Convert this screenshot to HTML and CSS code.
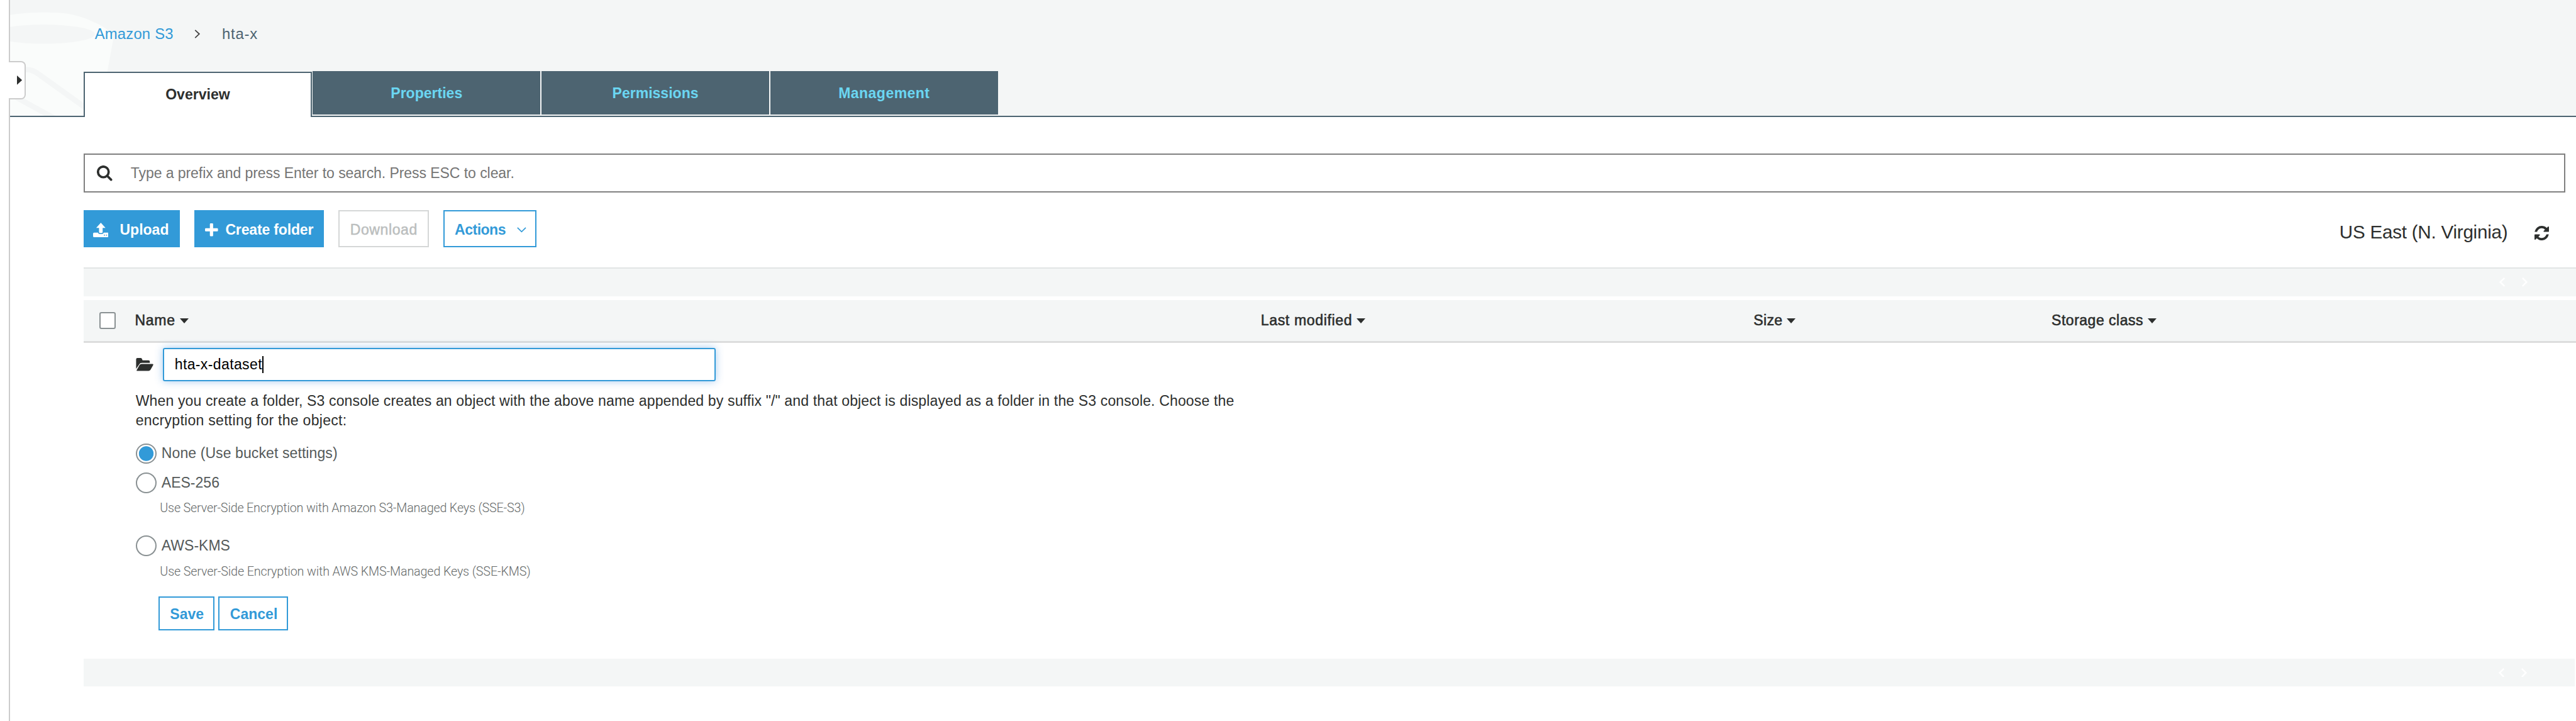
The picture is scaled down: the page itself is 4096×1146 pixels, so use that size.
FILE: index.html
```html
<!DOCTYPE html>
<html lang="en">
<head>
<meta charset="utf-8">
<title>S3 Management Console</title>
<link rel="stylesheet" href="styles.css">
</head>
<body>
<div class="rail">
  <button class="rail-toggle" aria-label="Open panel"><svg viewBox="0 0 10 18"><path d="M0 0L10 9L0 18Z"/></svg></button>
</div>
<main class="main">
  <header class="header">
    <svg class="bucket" viewBox="0 0 220 224" preserveAspectRatio="none">
      <path class="bucket-body" d="M0 29C30 24 60 23 96 25C125 27 145 35 160 42C182 51 198 62 199 78L188 138L181 224H0Z"/>
      <ellipse class="bucket-hole" cx="65" cy="66" rx="99" ry="18.5"/>
      <path class="bucket-line" d="M22 134.500C42 133 48 138 55 143L150 211M12 188L96 234"/>
    </svg>
    <nav class="crumbs">
      <a class="crumb-link"><span class="t t-s3">Amazon S3</span></a>
      <svg class="crumb-sep" viewBox="0 0 11 17"><path d="M1.500 1L9.500 8.500L1.500 16"/></svg>
      <span class="t t-bucket">hta-x</span>
    </nav>
    <div class="tabs">
      <div class="tab tab-active"><span class="t">Overview</span></div>
      <div class="tab"><span class="t">Properties</span></div>
      <div class="tab"><span class="t">Permissions</span></div>
      <div class="tab"><span class="t t-mgmt">Management</span></div>
    </div>
  </header>
  <section class="content">
    <div class="search">
      <svg class="search-icon" viewBox="0 0 30 30"><circle cx="12.500" cy="12.500" r="10.300"/><path d="M20 20L27.500 27.500"/></svg>
      <span class="t t-search">Type a prefix and press Enter to search. Press ESC to clear.</span>
    </div>
    <div class="toolbar">
      <button class="btn btn-fill btn-upload">
        <svg class="icon-upload" viewBox="0 0 30 28"><path d="M15 0L24 10H18.500V18.500Q18.500 20 15 20Q11.500 20 11.500 18.500V10H6Z"/><path d="M2 19H9.500Q10 22 15 22Q20 22 20.500 19H28Q30 19 30 21V26Q30 28 28 28H2Q0 28 0 26V21Q0 19 2 19ZM21 23V25H23V23ZM25 23V25H27V23Z" fill-rule="evenodd"/></svg>
        <span class="t">Upload</span>
      </button>
      <button class="btn btn-fill btn-create">
        <svg class="icon-plus" viewBox="0 0 24 24"><path d="M9 1.500Q9 0 10.500 0H13.500Q15 0 15 1.500V9H22.500Q24 9 24 10.500V13.500Q24 15 22.500 15H15V22.500Q15 24 13.500 24H10.500Q9 24 9 22.500V15H1.500Q0 15 0 13.500V10.500Q0 9 1.500 9H9Z"/></svg>
        <span class="t t-create">Create folder</span>
      </button>
      <button class="btn btn-off btn-download"><span class="t">Download</span></button>
      <button class="btn btn-line btn-actions">
        <span class="t t-actions">Actions</span>
        <svg class="icon-down" viewBox="0 0 18 10"><path d="M1 1L9 9L17 1"/></svg>
      </button>
      <div class="region">
        <span class="t">US East (N. Virginia)</span>
        <svg class="icon-refresh" viewBox="0 0 1536 1536"><path d="M1511 928q0 5-1 7-64 268-268 434.500t-478 166.500q-146 0-282.500-55t-243.500-157l-129 129q-19 19-45 19t-45-19-19-45v-448q0-26 19-45t45-19h448q26 0 45 19t19 45-19 45l-137 137q71 66 161 102t187 36q134 0 250-65t186-179q11-17 53-117 8-23 30-23h192q13 0 22.500 9.500t9.500 22.500zM1536 128v448q0 26-19 45t-45 19h-448q-26 0-45-19t-19-45 19-45l138-138q-148-137-349-137-134 0-250 65t-186 179q-11 17-53 117-8 23-30 23h-199q-13 0-22.500-9.500t-9.500-22.500v-7q65-268 270-434.500t480-166.500q146 0 284 55.500t245 156.500l130-129q19-19 45-19t45 19 19 45z"/></svg>
      </div>
    </div>
    <div class="pager pager-top">
      <svg viewBox="0 0 11 18"><path d="M10 1L2 9L10 17"/></svg>
      <svg viewBox="0 0 11 18"><path d="M1 1L9 9L1 17"/></svg>
    </div>
    <div class="thead">
      <span class="checkbox"></span>
      <span class="th"><span class="t t-name">Name</span><i class="sort"></i></span>
      <span class="th"><span class="t t-modified">Last modified</span><i class="sort"></i></span>
      <span class="th"><span class="t t-size">Size</span><i class="sort"></i></span>
      <span class="th"><span class="t t-class">Storage class</span><i class="sort"></i></span>
    </div>
    <div class="form">
      <div class="name-row">
        <svg class="icon-folder" viewBox="0 0 33 25"><path d="M0 21V2.500Q0 0 2.500 0H9Q11 0 11.500 2L12.500 4.500H24Q26.500 4.500 26.500 7V9.500H11Q7.500 9.500 6 12.500Z"/><path d="M2 25Q.5 25 1.300 23L6.800 13.500Q8 11.500 10.500 11.500H31.500Q34 11.500 32.800 14L28 22.500Q26.500 25 24 25Z"/></svg>
        <div class="name-input"><span class="t">hta-x-dataset</span><i class="caret"></i></div>
      </div>
      <p class="note"><span class="t t-note1">When you create a folder, S3 console creates an object with the above name appended by suffix "/" and that object is displayed as a folder in the S3 console. Choose the</span><br><span class="t t-note2">encryption setting for the object:</span></p>
      <label class="option"><span class="radio radio-on"></span><span class="t t-none">None (Use bucket settings)</span></label>
      <label class="option option-next"><span class="radio"></span><span class="t">AES-256</span></label>
      <div class="hint"><span class="t t-hint1">Use Server-Side Encryption with Amazon S3-Managed Keys (SSE-S3)</span></div>
      <label class="option option-last"><span class="radio"></span><span class="t">AWS-KMS</span></label>
      <div class="hint"><span class="t t-hint2">Use Server-Side Encryption with AWS KMS-Managed Keys (SSE-KMS)</span></div>
      <div class="form-actions">
        <button class="btn btn-line btn-save"><span class="t">Save</span></button>
        <button class="btn btn-line btn-cancel"><span class="t">Cancel</span></button>
      </div>
    </div>
    <div class="pager pager-bottom">
      <svg viewBox="0 0 11 18"><path d="M10 1L2 9L10 17"/></svg>
      <svg viewBox="0 0 11 18"><path d="M1 1L9 9L1 17"/></svg>
    </div>
  </section>
</main>
</body>
</html>
```
FILE: styles.css
```css
/* 1rem is ten layout units */
html { font-size: 8.2315px; }
* { box-sizing: border-box; }
body {
  margin: 0;
  height: 1146px;
  display: flex;
  overflow: hidden;
  background: #fff;
  color: #2d2f2e;
  font-family: "Liberation Sans", Arial, sans-serif;
  font-size: 2.8rem;
}
svg { display: block; flex: none; }
button { font-family: inherit; margin: 0; padding: 0; }
.t { font-size: 2.8rem; white-space: nowrap; }

.rail {
  position: relative;
  flex: none;
  width: 2rem;
  border-right: 2px solid #ccc;
}
.rail-toggle {
  position: absolute;
  z-index: 2;
  left: 1.7rem;
  top: 11.8rem;
  width: 3.25rem;
  height: 7.4rem;
  padding-left: 1.55rem;
  border: 2px solid #ccc;
  border-left: 0;
  border-radius: 0 .9rem .9rem 0;
  background: #fff;
}
.rail-toggle svg { width: 1rem; height: 1.8rem; fill: #2d2f2e; }

.main { flex: 1; min-width: 0; }
.header {
  position: relative;
  height: 22.6rem;
  display: flex;
  flex-direction: column;
  justify-content: space-between;
  background: #f4f6f6;
  border-bottom: 2px solid #4d6471;
}
.bucket { position: absolute; left: 0; top: 0; width: 22rem; height: 22.4rem; }
.bucket-body { fill: #fafcfb; }
.bucket-hole { fill: #f4f6f6; }
.bucket-line { fill: none; stroke: #f4f6f6; stroke-width: 10.500; }

.crumbs {
  position: relative;
  display: flex;
  align-items: center;
  height: 4rem;
  margin: 4.6rem 0 0 16.3rem;
  color: #4d6471;
}
.crumb-link { width: 19.2rem; color: #329ad8; }
.crumb-sep { width: 1.1rem; height: 1.7rem; margin-right: 4.3rem; fill: none; stroke: #444; stroke-width: 2.200; }
.crumbs .t { font-size: 2.9rem; }
.t-s3 { letter-spacing: .024rem; }
.t-bucket { letter-spacing: .09rem; }

.tabs { position: relative; display: flex; align-items: flex-end; gap: .2rem; margin-left: 14.2rem; }
.tab {
  width: 44rem;
  height: 8.4rem;
  margin-bottom: .2rem;
  padding-top: .2rem;
  display: flex;
  align-items: center;
  justify-content: center;
  background: #4d6471;
  color: #6bd6f2;
  font-weight: bold;
}
.tab-active {
  height: 8.8rem;
  margin-bottom: -2px;
  padding-top: 0;
  border: 2px solid #4d6471;
  border-bottom: 0;
  background: #fff;
  color: #2d2f2e;
}
.t-mgmt { letter-spacing: .055rem; }

.content { padding: 7rem 0 0 14.2rem; }
.search {
  display: flex;
  align-items: center;
  height: 7.6rem;
  margin-right: 2.1rem;
  padding: .2rem 0 0 2.3rem;
  border: 2px solid #808080;
  color: #757575;
}
.search-icon { width: 3rem; height: 3rem; margin-right: 3.5rem; fill: none; stroke: #2d2f2e; stroke-width: 4.500; stroke-linecap: round; }
.t-search { letter-spacing: -.009rem; }

.toolbar { display: flex; gap: 2.8rem; height: 7.2rem; margin-top: 3.4rem; }
.btn {
  display: flex;
  align-items: center;
  padding: .4rem 0 0 2rem;
  border: 2px solid #329ad8;
  font-weight: bold;
}
.btn-fill { background: #329ad8; color: #fff; fill: #fff; }
.btn-line { background: #fff; color: #329ad8; }
.btn-off { background: #fff; border-color: #d5d7d7; color: #bbbebe; }
.btn-upload { width: 18.6rem; padding-left: 1.5rem; }
.icon-upload { width: 3rem; height: 2.8rem; margin-right: 2.2rem; }
.btn-create { width: 25rem; padding-left: 1.8rem; }
.icon-plus { width: 2.5rem; height: 2.5rem; margin-right: 1.4rem; }
.t-create { letter-spacing: -.02rem; }
.btn-download { width: 17.4rem; }
.btn-off .t { font-weight: normal; letter-spacing: .07rem; -webkit-text-stroke: .5px; }
.btn-actions { width: 18rem; }
.t-actions { letter-spacing: -.06rem; }
.icon-down { width: 1.8rem; height: 1rem; margin-left: 2.2rem; fill: none; stroke: #329ad8; stroke-width: 2; }
.region { display: flex; align-items: center; margin: 1.2rem 5.2rem 0 auto; }
.region .t { font-size: 3.6rem; letter-spacing: -.03rem; }
.icon-refresh { width: 2.8rem; height: 2.8rem; margin: .4rem 0 0 5.2rem; fill: #2d2f2e; }

.pager {
  display: flex;
  justify-content: flex-end;
  align-items: center;
  gap: 3.2rem;
  height: 5.6rem;
  padding-right: 9.4rem;
  background: #f4f6f6;
}
.pager svg { width: 1.1rem; height: 1.8rem; fill: none; stroke: #fff; stroke-width: 3; }
.pager-top { margin-top: 3.8rem; border-top: 2px solid #e2e5e5; }
.pager-bottom { height: 5.4rem; margin: 5.4rem .2rem 0 0; padding-right: 9.3rem; }

.thead {
  display: grid;
  grid-template-columns: 6.85rem 217.5rem 95.2rem 57.55rem 1fr;
  align-items: center;
  height: 8.2rem;
  margin-top: .8rem;
  padding-left: 3rem;
  background: #f4f6f6;
  border-bottom: 3px solid #dcdddd;
}
.checkbox { width: 3.2rem; height: 3.2rem; border: 2px solid #8a9193; border-radius: .4rem; background: #fff; }
.th { display: flex; align-items: center; -webkit-text-stroke: .6px; }
.t-name { letter-spacing: .09rem; }
.t-modified { letter-spacing: .08rem; }
.t-size { letter-spacing: .04rem; }
.t-class { letter-spacing: .06rem; }
.sort { margin-left: .85rem; border: .9rem solid transparent; border-top: 1.05rem solid #2d2f2e; border-bottom: 0; }

.form { padding: 1rem 0 0 10rem; }
.name-row { display: flex; align-items: center; }
.icon-folder { width: 3.4rem; height: 2.5rem; margin-right: 1.9rem; fill: #2d2f2e; }
.name-input {
  display: flex;
  align-items: center;
  width: 106.7rem;
  height: 6.4rem;
  padding-left: 2rem;
  border: 2px solid #329ad8;
  border-radius: .4rem;
  background: #fff;
  box-shadow: 0 0 1.6rem rgba(60, 140, 220, .45);
  color: #000;
  letter-spacing: .045rem;
}
.caret { width: 2px; height: 3.2rem; background: #000; }
.note { margin: 1.93rem 0 2.47rem; line-height: 3.8rem; }
.t-note1 { letter-spacing: .0165rem; }
.t-note2 { letter-spacing: .033rem; }
.option { display: flex; align-items: center; height: 4rem; color: #555a5a; }
.t-none { letter-spacing: .01rem; }
.option-next { margin-top: 1.6rem; }
.option-last { margin-top: 3.73rem; }
.radio { width: 4rem; height: 4rem; margin-right: 1rem; border: 2px solid #8a9193; border-radius: 50%; }
.radio-on { background: radial-gradient(circle, #329ad8 1.37rem, #fff 1.47rem); }
.hint { display: flex; align-items: center; height: 3rem; margin: 1.47rem 0 0 4.7rem; color: #666a6a; }
.hint .t { font-family: Roboto, "Liberation Sans", sans-serif; font-size: 2.4rem; font-weight: 300; }
.t-hint1 { letter-spacing: -.0235rem; }
.t-hint2 { letter-spacing: -.019rem; }
.form-actions { display: flex; gap: .8rem; height: 6.6rem; margin: 3.33rem 0 0 4.4rem; }
.form-actions .btn { padding-top: .3rem; }
.btn-save { width: 10.8rem; }
.btn-cancel { width: 13.4rem; }
```
